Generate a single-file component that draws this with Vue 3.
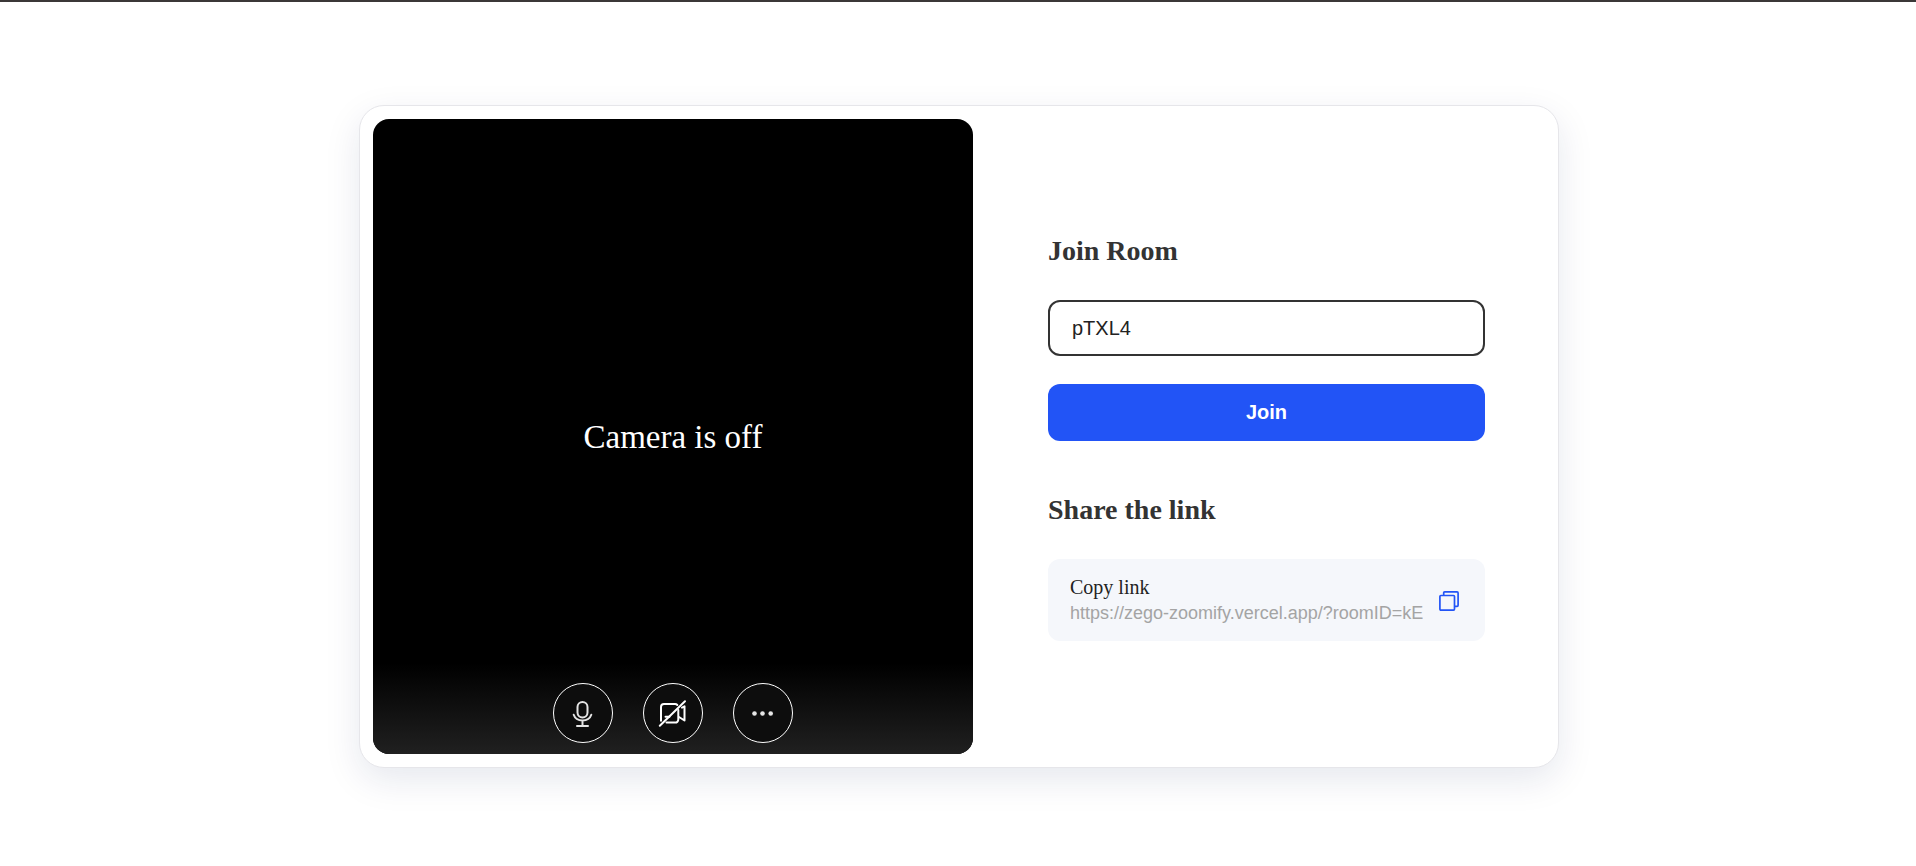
<script setup>
import { ref } from 'vue'

const roomId = ref('pTXL4')
const shareUrl = ref('https://zego-zoomify.vercel.app/?roomID=kE')
</script>

<template>
  <div class="page">
    <main class="card">
      <section class="preview" aria-label="Camera preview">
        <p class="status">Camera is off</p>
        <div class="controls">
          <button class="round" type="button" aria-label="Microphone">
            <svg viewBox="0 0 36 36" fill="none" stroke="#e4e4e4" stroke-width="2" stroke-linecap="round">
              <rect x="12.5" y="7" width="10" height="15.400" rx="5" />
              <path d="M8.700 19.800C10 23.600 13.200 25.500 17.500 25.500S25 23.600 26.300 19.800M17.500 25.500v5.200M12 30.900h11" />
            </svg>
          </button>
          <button class="round" type="button" aria-label="Camera">
            <svg viewBox="0 0 36 36" fill="none" stroke="#fff" stroke-width="2" stroke-linecap="round" stroke-linejoin="round">
              <path d="M6 25.800V12a3 3 0 0 1 3-3H20a3 3 0 0 1 2.300 1" />
              <path d="M23.300 15V24.600a3 3 0 0 1-3 3H11.500" />
              <path d="M10.500 21.700h4M27 12.600l2.500-1.300v14.200L24 22" />
              <path d="M4.800 30.800L30 6.300" />
            </svg>
          </button>
          <button class="round" type="button" aria-label="More options">
            <svg viewBox="0 0 36 36" fill="#e6e6e6">
              <circle cx="9.500" cy="18.500" r="2.300" />
              <circle cx="17.500" cy="18.500" r="2.300" />
              <circle cx="25.700" cy="18.500" r="2.300" />
            </svg>
          </button>
        </div>
      </section>

      <section class="side">
        <form class="join" @submit.prevent>
          <h2><label for="room">Join Room</label></h2>
          <input id="room" v-model="roomId" class="room" type="text" autocomplete="off" spellcheck="false" />
          <button class="submit" type="submit">Join</button>
        </form>
        <h2>Share the link</h2>
        <div class="share">
          <div class="link">
            <label for="url">Copy link</label>
            <input id="url" :value="shareUrl" type="text" readonly />
          </div>
          <button class="copy" type="button" aria-label="Copy link">
            <svg viewBox="0 0 20 20" fill="none" stroke="#2254f6" stroke-width="1.7" stroke-linejoin="round">
              <rect x="0.900" y="4.500" width="14.600" height="14.600" rx="1" />
              <path d="M4.700 4.500V1.900a1 1 0 0 1 1-1H18.100a1 1 0 0 1 1 1V14.300a1 1 0 0 1-1 1H15.500" />
            </svg>
          </button>
        </div>
      </section>
    </main>
  </div>
</template>

<style>
body {
  margin: 0;
  background: #fff;
}
</style>

<style scoped>
* {
  box-sizing: border-box;
}

.page {
  min-height: 100vh;
  padding: 103px 24px 48px 26px;
  border-top: 2px solid #3b3838;
  font-family: "Liberation Serif", "Times New Roman", serif;
}

.card {
  display: flex;
  max-width: 1200px;
  margin: 0 auto;
  padding: 13px;
  border: 1px solid #e6e6ea;
  border-radius: 25px;
  background: #fff;
  box-shadow: 0 12px 36px rgba(13, 29, 84, 0.1);
}

.preview {
  display: flex;
  flex: 0 1 600px;
  flex-direction: column;
  min-height: 635px;
  position: relative;
  align-items: center;
  justify-content: center;
  border-radius: 16px;
  overflow: hidden;
  background: #000;
}

.status {
  margin: 0;
  color: #fff;
  font-size: 33px;
  line-height: 38px;
}

.controls {
  position: absolute;
  inset: auto 0 0;
  display: flex;
  justify-content: center;
  gap: 30px;
  padding: 20px 0 11px;
  background: linear-gradient(#000, #202020);
}

.round {
  display: grid;
  place-items: center;
  width: 60px;
  height: 60px;
  padding: 0;
  border: 1px solid #fff;
  border-radius: 50%;
  background: #0d0d0d;
}

.round svg {
  width: 36px;
  height: 36px;
}

.side {
  display: flex;
  flex: 1;
  flex-direction: column;
  justify-content: center;
  min-width: 0;
  padding: 2px 60px 0 75px;
}

h2 {
  margin: 0 0 32px;
  color: #333;
  font-size: 28px;
  line-height: 34px;
}

.join {
  display: flex;
  flex-direction: column;
  margin-bottom: 52px;
}

.room {
  width: 100%;
  height: 56px;
  margin-bottom: 28px;
  padding: 0 22px;
  border: 2px solid #333;
  border-radius: 12px;
  outline: none;
  background: #fff;
  color: #222;
  font: 20px "Liberation Sans", Arial, sans-serif;
}

.submit {
  height: 57px;
  border: 0;
  border-radius: 12px;
  background: #2254f6;
  color: #fff;
  font: bold 20px "Liberation Sans", Arial, sans-serif;
}

.share {
  display: flex;
  align-items: center;
  padding: 16px 26px 14px 22px;
  border-radius: 12px;
  background: #f5f7fb;
}

.link {
  display: flex;
  flex: 1;
  flex-direction: column;
  min-width: 0;
  margin-right: 16px;
}

.link label {
  color: #222;
  font-size: 20px;
  line-height: 25px;
}

.link input {
  width: 100%;
  height: 27px;
  padding: 0;
  border: 0;
  outline: none;
  background: transparent;
  color: #a4a4a4;
  font: 18px "Liberation Sans", Arial, sans-serif;
}

.copy {
  display: block;
  padding: 0;
  border: 0;
  background: none;
}

.copy svg {
  display: block;
  width: 20px;
  height: 20px;
}
</style>
